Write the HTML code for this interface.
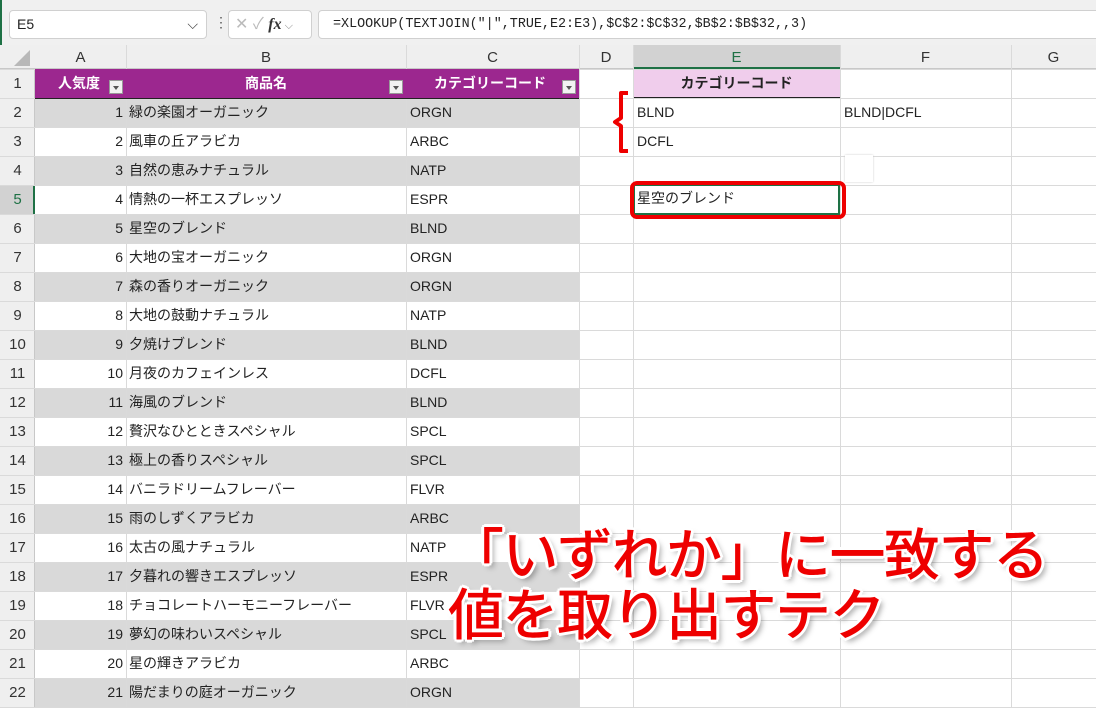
<!DOCTYPE html><html><head><meta charset="utf-8"><style>
*{margin:0;padding:0;box-sizing:border-box}
body{width:1096px;height:708px;overflow:hidden;background:#fff;font-family:"Liberation Sans","Noto Sans CJK JP",sans-serif;position:relative}
.a{position:absolute}
.cell{position:absolute;font-size:14px;color:#222;line-height:29px;white-space:nowrap}
.vl{position:absolute;width:1px;background:#dadada}
.hl{position:absolute;height:1px;background:#dadada}
.fb{position:absolute;width:14px;height:14px;border:1px solid #999;background:#f2f2f2;top:80px}
.fb:after{content:"";position:absolute;left:3px;top:5px;border-left:3px solid transparent;border-right:3px solid transparent;border-top:4px solid #555}
.big{position:absolute;left:448px;font-size:56px;font-weight:500;color:#ee0000;letter-spacing:-1.5px;font-family:"Noto Sans CJK JP",sans-serif;white-space:nowrap;
text-shadow:0 0 2px #fff,2px 2px 0 #fff,-2px -2px 0 #fff,2px -2px 0 #fff,-2px 2px 0 #fff,3px 0 0 #fff,-3px 0 0 #fff,0 3px 0 #fff,0 -3px 0 #fff,4px 4px 6px rgba(0,0,0,.35)}
</style></head><body>
<div class="a" style="left:0;top:0;width:1096px;height:45px;background:#f0f0f0"></div>
<div class="a" style="left:0;top:0;width:2px;height:708px;background:#1e7145"></div>
<div class="a" style="left:9px;top:10px;width:198px;height:29px;background:#fff;border:1px solid #d0d0d0;border-radius:4px;font-size:14px;line-height:27px;padding-left:7px;color:#222">E5<span style="position:absolute;right:8px;color:#444">⌵</span></div>
<div class="a" style="left:214px;top:14px;font-size:14px;color:#555">⋮</div>
<div class="a" style="left:228px;top:10px;width:84px;height:29px;background:#fff;border:1px solid #d0d0d0;border-radius:4px;font-size:16px;line-height:27px;color:#bbb;padding-left:6px">✕ ✓ <i style="color:#333;font-family:'Liberation Serif',serif;font-weight:bold">fx</i><span style="font-size:11px;color:#888"> ⌵</span></div>
<div class="a" style="left:318px;top:10px;width:790px;height:29px;background:#fff;border:1px solid #d0d0d0;border-radius:4px;font-family:'Liberation Mono',monospace;font-size:13.4px;line-height:27px;padding-left:14px;color:#222">=XLOOKUP(TEXTJOIN("|",TRUE,E2:E3),$C$2:$C$32,$B$2:$B$32,,3)</div>
<div class="a" style="left:0;top:45px;width:1096px;height:24px;background:#efefef;border-bottom:1px solid #c8c8c8"></div>
<div class="a" style="left:633px;top:45px;width:207px;height:24px;background:#d2d2d2;border-bottom:2px solid #1e7145"></div>
<div class="a" style="left:0;top:69px;width:35px;height:639px;background:#efefef;border-right:1px solid #c8c8c8"></div>
<div class="a" style="left:0;top:185px;width:35px;height:29px;background:#d2d2d2;border-right:2px solid #1e7145"></div>
<div class="a" style="left:14px;top:50px;width:0;height:0;border-left:16px solid transparent;border-bottom:16px solid #b8b8b8"></div>
<div id="g"></div>
<script>
var cols=[[35,126,'A'],[126,406,'B'],[406,579,'C'],[579,633,'D'],[633,840,'E'],[840,1011,'F'],[1011,1096,'G']];
var names=["緑の楽園オーガニック","風車の丘アラビカ","自然の恵みナチュラル","情熱の一杯エスプレッソ","星空のブレンド","大地の宝オーガニック","森の香りオーガニック","大地の鼓動ナチュラル","夕焼けブレンド","月夜のカフェインレス","海風のブレンド","贅沢なひとときスペシャル","極上の香りスペシャル","バニラドリームフレーバー","雨のしずくアラビカ","太古の風ナチュラル","夕暮れの響きエスプレッソ","チョコレートハーモニーフレーバー","夢幻の味わいスペシャル","星の輝きアラビカ","陽だまりの庭オーガニック"];
var codes=["ORGN","ARBC","NATP","ESPR","BLND","ORGN","ORGN","NATP","BLND","DCFL","BLND","SPCL","SPCL","FLVR","ARBC","NATP","ESPR","FLVR","SPCL","ARBC","ORGN"];
var h='';
for(var i=0;i<21;i++){var t=98+i*29;if(i%2==0)h+='<div class="a" style="left:35px;top:'+t+'px;width:544px;height:29px;background:#d9d9d9"></div>';}
for(var r=0;r<=22;r++){h+='<div class="hl" style="left:0;top:'+(69+r*29)+'px;width:1096px"></div>';}
cols.forEach(function(c){h+='<div class="vl" style="left:'+c[1]+'px;top:45px;height:663px"></div>';h+='<div class="cell" style="left:'+c[0]+'px;width:'+(c[1]-c[0])+'px;top:43px;text-align:center;font-size:15px;color:'+(c[2]=='E'?'#1e7145':'#333')+'">'+c[2]+'</div>';});
for(var r=1;r<=22;r++){h+='<div class="cell" style="left:0;width:35px;top:'+(69+(r-1)*29)+'px;text-align:center;font-size:15px;color:'+(r==5?'#1e7145':'#333')+'">'+r+'</div>';}
h+='<div class="a" style="left:35px;top:69px;width:544px;height:29px;background:#9c278f"></div>';
h+='<div class="hl" style="left:35px;top:98px;width:544px;background:#222"></div>';
h+='<div class="cell" style="left:58px;top:69px;color:#fff;font-weight:bold">人気度</div><div class="fb" style="left:109px"></div>';
h+='<div class="cell" style="left:126px;width:280px;top:69px;text-align:center;color:#fff;font-weight:bold">商品名</div><div class="fb" style="left:389px"></div>';
h+='<div class="cell" style="left:434px;top:69px;color:#fff;font-weight:bold">カテゴリーコード</div><div class="fb" style="left:562px"></div>';
for(var i=0;i<21;i++){var t=98+i*29;h+='<div class="cell" style="left:35px;width:88px;text-align:right;top:'+t+'px">'+(i+1)+'</div><div class="cell" style="left:129px;top:'+t+'px">'+names[i]+'</div><div class="cell" style="left:410px;top:'+t+'px">'+codes[i]+'</div>';}
h+='<div class="a" style="left:634px;top:70px;width:206px;height:28px;background:#f0cdec;border-bottom:1px solid #222"></div>';
h+='<div class="cell" style="left:633px;width:207px;top:69px;text-align:center;font-weight:bold">カテゴリーコード</div>';
h+='<div class="cell" style="left:637px;top:98px">BLND</div><div class="cell" style="left:637px;top:127px">DCFL</div><div class="cell" style="left:844px;top:98px">BLND|DCFL</div>';
h+='<div class="a" style="left:845px;top:155px;width:28px;height:27px;background:#fff;box-shadow:0 0 2px #ccc"></div>';
h+='<div class="a" style="left:633px;top:184px;width:207px;height:31px;border:2px solid #1e7145"></div>';
h+='<div class="cell" style="left:637px;top:184px">星空のブレンド</div>';
document.getElementById('g').innerHTML=h;
</script>
<svg class="a" style="left:608px;top:88px" width="30" height="68"><path d="M20 5 H13 V30 L7 34 L13 38 V63 H20" fill="none" stroke="#ee0000" stroke-width="4" stroke-linejoin="round"/></svg>
<div class="a" style="left:630px;top:181px;width:216px;height:38px;border:4px solid #ee0000;border-radius:7px"></div>
<div class="big" style="top:517px;line-height:70px">「いずれか」に一致する</div>
<div class="big" style="top:577px;line-height:70px">値を取り出すテク</div>
</body></html>
